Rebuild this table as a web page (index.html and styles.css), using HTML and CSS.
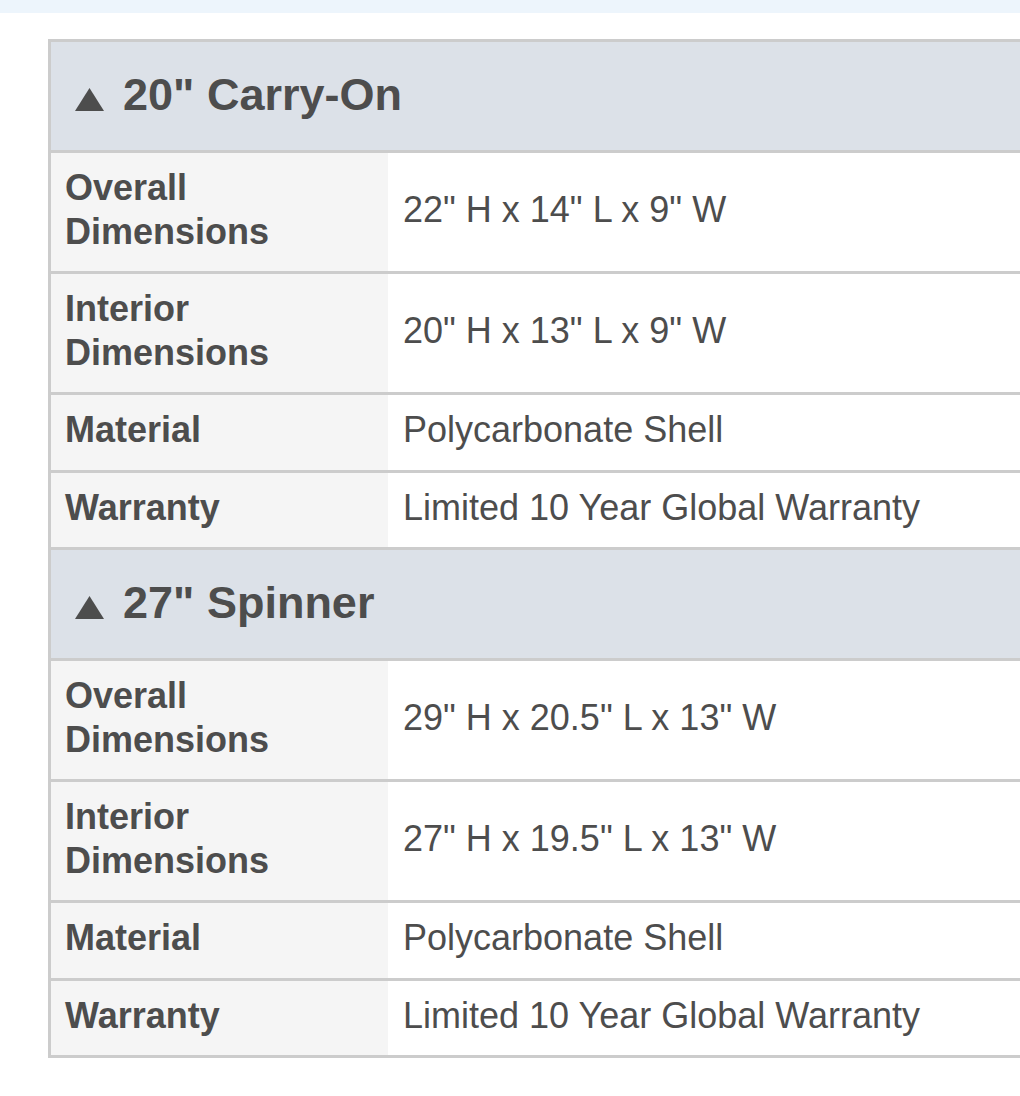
FILE: index.html
```html
<!DOCTYPE html>
<html lang="en">
<head>
<meta charset="utf-8">
<title>Luggage Specifications</title>
<link rel="stylesheet" href="styles.css">
</head>
<body>
<div class="topbar"></div>
<div class="page">
  <div class="specs">
    <section class="group">
      <h2 class="group-head"><svg class="tri" viewBox="0 0 29 23" width="29" height="23"><polygon points="14.5,0 29,23 0,23"/></svg>20" Carry-On</h2>
      <div class="row double"><div class="label">Overall Dimensions</div><div class="value">22" H x 14" L x 9" W</div></div>
      <div class="row double"><div class="label">Interior Dimensions</div><div class="value">20" H x 13" L x 9" W</div></div>
      <div class="row"><div class="label">Material</div><div class="value">Polycarbonate Shell</div></div>
      <div class="row"><div class="label">Warranty</div><div class="value">Limited 10 Year Global Warranty</div></div>
    </section>
    <section class="group">
      <h2 class="group-head"><svg class="tri" viewBox="0 0 29 23" width="29" height="23"><polygon points="14.5,0 29,23 0,23"/></svg>27" Spinner</h2>
      <div class="row double"><div class="label">Overall Dimensions</div><div class="value">29" H x 20.5" L x 13" W</div></div>
      <div class="row double"><div class="label">Interior Dimensions</div><div class="value">27" H x 19.5" L x 13" W</div></div>
      <div class="row"><div class="label">Material</div><div class="value">Polycarbonate Shell</div></div>
      <div class="row"><div class="label">Warranty</div><div class="value">Limited 10 Year Global Warranty</div></div>
    </section>
  </div>
</div>
</body>
</html>
```

FILE: styles.css
```css
html, body {
  margin: 0;
  padding: 0;
  background: #ffffff;
  font-family: "Liberation Sans", Arial, Helvetica, sans-serif;
  color: #4d4d4d;
}

.topbar {
  height: 13px;
  background: #edf5fc;
}

.page {
  padding: 26px 0 0 48px;
}

.specs {
  border-top: 3px solid #cccccc;
  border-left: 3px solid #cccccc;
}

.group-head {
  margin: 0;
  display: flex;
  align-items: baseline;
  height: 111px;
  box-sizing: border-box;
  padding: 26px 0 31px 24px;
  background: #dce1e8;
  border-bottom: 3px solid #cccccc;
  font-size: 45px;
  line-height: 54px;
  font-weight: bold;
  color: #4d4d4d;
}

.tri {
  flex: none;
  margin-right: 19px;
  fill: #4d4d4d;
  align-self: center;
  position: relative;
  top: 6px;
}

.row {
  display: grid;
  grid-template-columns: 337px 1fr;
  border-bottom: 3px solid #cccccc;
  font-size: 36px;
  line-height: 43.5px;
}

.label {
  background: #f5f5f5;
  font-weight: bold;
  padding: 13px 100px 18px 14px;
}

.value {
  background: #ffffff;
  padding: 13px 0 18px 15px;
  display: flex;
  align-items: center;
}
```
